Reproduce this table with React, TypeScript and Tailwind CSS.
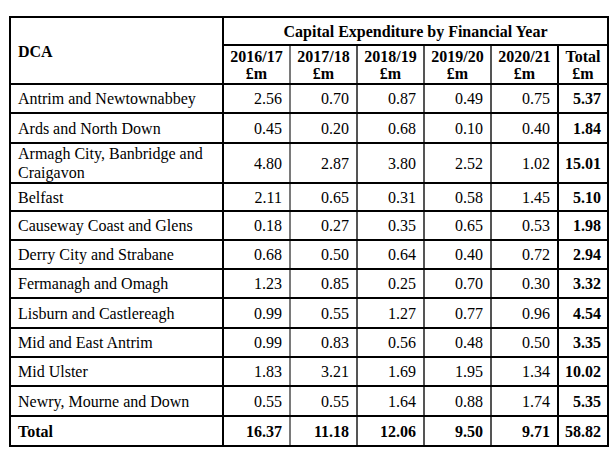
const rows: { name: string; values: string[]; total: string; h: string }[] = [
	{ name: 'Antrim and Newtownabbey', values: ['2.56', '0.70', '0.87', '0.49', '0.75'], total: '5.37', h: 'h-[29px]' },
	{ name: 'Ards and North Down', values: ['0.45', '0.20', '0.68', '0.10', '0.40'], total: '1.84', h: 'h-[30px]' },
	{ name: 'Armagh City, Banbridge and Craigavon', values: ['4.80', '2.87', '3.80', '2.52', '1.02'], total: '15.01', h: 'h-[40px]' },
	{ name: 'Belfast', values: ['2.11', '0.65', '0.31', '0.58', '1.45'], total: '5.10', h: 'h-[28px]' },
	{ name: 'Causeway Coast and Glens', values: ['0.18', '0.27', '0.35', '0.65', '0.53'], total: '1.98', h: 'h-[29px]' },
	{ name: 'Derry City and Strabane', values: ['0.68', '0.50', '0.64', '0.40', '0.72'], total: '2.94', h: 'h-[29px]' },
	{ name: 'Fermanagh and Omagh', values: ['1.23', '0.85', '0.25', '0.70', '0.30'], total: '3.32', h: 'h-[29px]' },
	{ name: 'Lisburn and Castlereagh', values: ['0.99', '0.55', '1.27', '0.77', '0.96'], total: '4.54', h: 'h-[30px]' },
	{ name: 'Mid and East Antrim', values: ['0.99', '0.83', '0.56', '0.48', '0.50'], total: '3.35', h: 'h-[29px]' },
	{ name: 'Mid Ulster', values: ['1.83', '3.21', '1.69', '1.95', '1.34'], total: '10.02', h: 'h-[29px]' },
	{ name: 'Newry, Mourne and Down', values: ['0.55', '0.55', '1.64', '0.88', '1.74'], total: '5.35', h: 'h-[30px]' },
];

const years = ['2016/17', '2017/18', '2018/19', '2019/20', '2020/21'];
const totals = ['16.37', '11.18', '12.06', '9.50', '9.71'];

// inner year dividers are a lighter grey than the ruled lines
const yearBorder = ['border-r-[#7a7a7a]', 'border-r-[#555]', 'border-r-[#555]', 'border-r-[#555]', 'border-r-black'];

export default function App() {
	return (
		<div className="w-[612px] h-[450px] overflow-hidden bg-white pt-[16px] pl-[9px] font-['Liberation_Serif',serif] text-[16px] leading-[19px] text-black">
			<table className="table-fixed border-collapse w-[598px]">
				<colgroup>
					<col className="w-[213px]" />
					<col className="w-[67px]" />
					<col className="w-[67px]" />
					<col className="w-[67px]" />
					<col className="w-[67px]" />
					<col className="w-[67px]" />
					<col className="w-[50px]" />
				</colgroup>
				<thead>
					<tr className="h-[28px]">
						<th rowSpan={2} className="border-2 border-black text-left align-middle font-bold px-[7px] pt-[2px]">
							DCA
						</th>
						<th colSpan={6} className="border-2 border-black text-center font-bold">
							Capital Expenditure by Financial Year
						</th>
					</tr>
					<tr className="h-[39px]">
						{years.map((y, i) => (
							<th key={y} className={`border-y-2 border-y-black border-r-2 ${yearBorder[i]} text-center font-bold leading-[17px]`}>
								{y}
								<br />
								£m
							</th>
						))}
						<th className="border-2 border-black text-center font-bold leading-[17px]">
							Total
							<br />
							£m
						</th>
					</tr>
				</thead>
				<tbody>
					{rows.map((r) => (
						<tr key={r.name} className={r.h}>
							<td className="border-2 border-black px-[7px] leading-[19px]">{r.name}</td>
							{r.values.map((v, i) => (
								<td key={i} className={`border-y-2 border-y-black border-r-2 ${yearBorder[i]} text-right pr-[7px]`}>
									{v}
								</td>
							))}
							<td className="border-2 border-black text-right pr-[6px] font-bold">{r.total}</td>
						</tr>
					))}
					<tr className="h-[30px]">
						<td className="border-2 border-black px-[7px] font-bold">Total</td>
						{totals.map((v, i) => (
							<td key={i} className={`border-y-2 border-y-black border-r-2 ${yearBorder[i]} text-right pr-[7px] font-bold`}>
								{v}
							</td>
						))}
						<td className="border-2 border-black text-right pr-[6px] font-bold">58.82</td>
					</tr>
				</tbody>
			</table>
		</div>
	);
}
